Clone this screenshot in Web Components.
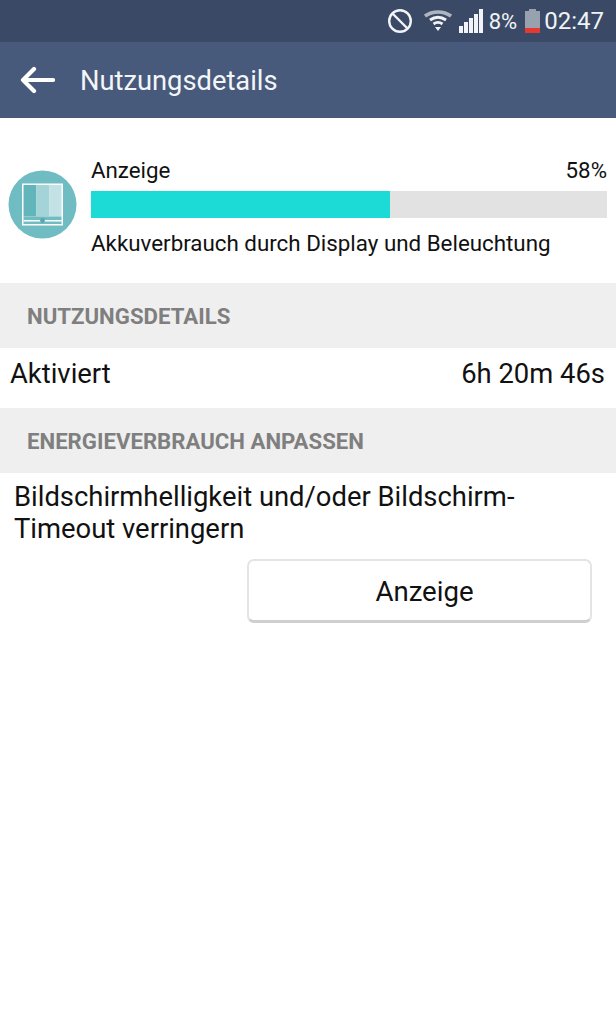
<!DOCTYPE html>
<html><head><meta charset="utf-8"><style>
html,body{margin:0;padding:0;background:#fff}
body{font-family:Roboto,sans-serif;color:#111;width:616px;height:1024px;overflow:hidden}
</style></head><body>
<app-screen>
<status-bar></status-bar>
<title-bar>Nutzungsdetails</title-bar>
<usage-head name="Anzeige" pct="58%" desc="Akkuverbrauch durch Display und Beleuchtung"></usage-head>
<section-head>NUTZUNGSDETAILS</section-head>
<detail-row label="Aktiviert" value="6h 20m 46s"></detail-row>
<section-head>ENERGIEVERBRAUCH ANPASSEN</section-head>
<tip-block label="Anzeige">Bildschirmhelligkeit und/oder Bildschirm-<br>Timeout verringern</tip-block>
</app-screen>
<script>
function def(name,css,html){
  customElements.define(name,class extends HTMLElement{
    connectedCallback(){
      if(this.shadowRoot)return;
      const r=this.attachShadow({mode:'open'});
      const a=n=>this.getAttribute(n)||'';
      r.innerHTML='<style>'+css+'</style>'+(typeof html==='function'?html(a):html);
    }
  });
}
def('app-screen',':host{display:flex;flex-direction:column;width:616px}','<slot></slot>');
def('status-bar',`:host{display:flex;align-items:center;justify-content:flex-end;height:42px;background:#3a4a66;color:#f1f3f6;font:22px Roboto,sans-serif;padding-right:12px;box-sizing:border-box}
svg{display:block;flex:none}
.pct{margin-left:6px;font-size:22px}.time{margin-left:3px;font-size:24px}`,
`<svg width="26" height="26" viewBox="0 0 26 26" style="margin-right:11px"><circle cx="13" cy="13" r="10.8" fill="none" stroke="#f1f3f6" stroke-width="2.4"/><path d="M5.5 5.5l15 15" stroke="#f1f3f6" stroke-width="2.4"/></svg>
<svg width="28" height="22" viewBox="0 0 28 22" style="margin-right:7px;margin-top:-1px"><path d="M1 6C8.500 .5 19.500 .5 27 6" fill="none" stroke="#aeb5c1" stroke-width="3.500"/><path d="M6 10C11 6.500 17 6.500 22 10" fill="none" stroke="#f1f3f6" stroke-width="3"/><path d="M9.500 14c2.800-2 6.200-2 9 0" fill="none" stroke="#f1f3f6" stroke-width="2.800"/><path d="M11 17h6l-3 4z" fill="#f1f3f6"/></svg>
<svg width="24" height="24" viewBox="0 0 24 24"><path d="M0 17h4v7H0zM5 13h4v11H5zM10 9h4v15h-4zM15 5h4v19h-4zM20 0h4v24h-4z" fill="#f1f3f6"/></svg>
<span class="pct">8%</span>
<svg width="17" height="24" viewBox="0 0 17 24" style="margin-left:7px"><path d="M5 0h7v2h4v22H1V2h4z" fill="#98a1ae"/><rect x="1" y="19" width="15" height="5" fill="#e5392f"/></svg>
<span class="time">02:47</span>`);
def('title-bar',`:host{display:flex;align-items:center;height:76px;background:#475a7b;color:#f3f5f8;font:27.300px/1 Roboto,sans-serif;box-sizing:border-box}
svg{margin-left:20px;margin-right:25px;flex:none}
span{margin-top:3px}`,
`<svg width="35" height="28" viewBox="0 0 35 28"><path d="M33 14H3M14 3L3 14l11 11" fill="none" stroke="#fff" stroke-width="4.200" stroke-linecap="round" stroke-linejoin="round"/></svg><span><slot></slot></span>`);
def('usage-head',`:host{display:flex;align-items:center;height:165px;box-sizing:border-box;padding:0 9px 0 8px}
svg{flex:none;margin-right:14px;margin-top:7px}
.m{flex:1;min-width:0;margin-top:11px}
.t{display:flex;justify-content:space-between;font-size:22.300px;line-height:26px}
.bar{height:27px;background:#e2e2e2;margin:8px 0 12px}
.fill{height:100%;width:58%;background:#1cdad6}
.d{font-size:22.350px;line-height:26px}`,
a=>`<svg width="69" height="69" viewBox="0 0 69 69"><circle cx="34.500" cy="34.500" r="34" fill="#6fbcc2"/><rect x="14" y="13.500" width="41" height="42" fill="#fff"/><rect x="15.500" y="15" width="13" height="31.500" fill="#62b5bb"/><rect x="28.500" y="15" width="13" height="31.500" fill="#a4d4d8"/><rect x="41.500" y="15" width="12" height="31.500" fill="#c3e2e5"/><rect x="15.500" y="46.500" width="38" height="7.500" fill="#6fbcc2"/><rect x="15.500" y="50" width="38" height="1.500" fill="#fff"/><circle cx="34.500" cy="50.500" r="2.400" fill="#5aa8ae"/></svg>
<div class="m"><div class="t"><span>${a('name')}</span><span>${a('pct')}</span></div><div class="bar"><div class="fill"></div></div><div class="d">${a('desc')}</div></div>`);
def('section-head',`:host{display:flex;align-items:center;height:65px;background:#efefef;color:#7f7f7f;font:bold 22.200px Roboto,sans-serif;padding-left:27px;box-sizing:border-box}`,'<slot></slot>');
def('detail-row',`:host{display:flex;justify-content:space-between;align-items:center;height:60px;padding:0 11px 8px 10px;font-size:27.400px;box-sizing:border-box}`,
a=>`<span>${a('label')}</span><span>${a('value')}</span>`);
def('tip-block',`:host{display:block;padding:8px 24px 0 14px;font-size:27.400px;line-height:32px}
.w{display:flex;justify-content:flex-end;margin-top:14px}`,
a=>`<div><slot></slot></div><div class="w"><push-button>${a('label')}</push-button></div>`);
def('push-button',`:host{display:flex;align-items:center;justify-content:center;width:345px;height:64px;box-sizing:border-box;background:#fff;border:2px solid #e4e4e4;border-bottom:3px solid #cfcfcf;border-radius:7px;font-size:27.600px;color:#111;padding:2px 0 0 10px}`,'<slot></slot>');
</script>
</body></html>
